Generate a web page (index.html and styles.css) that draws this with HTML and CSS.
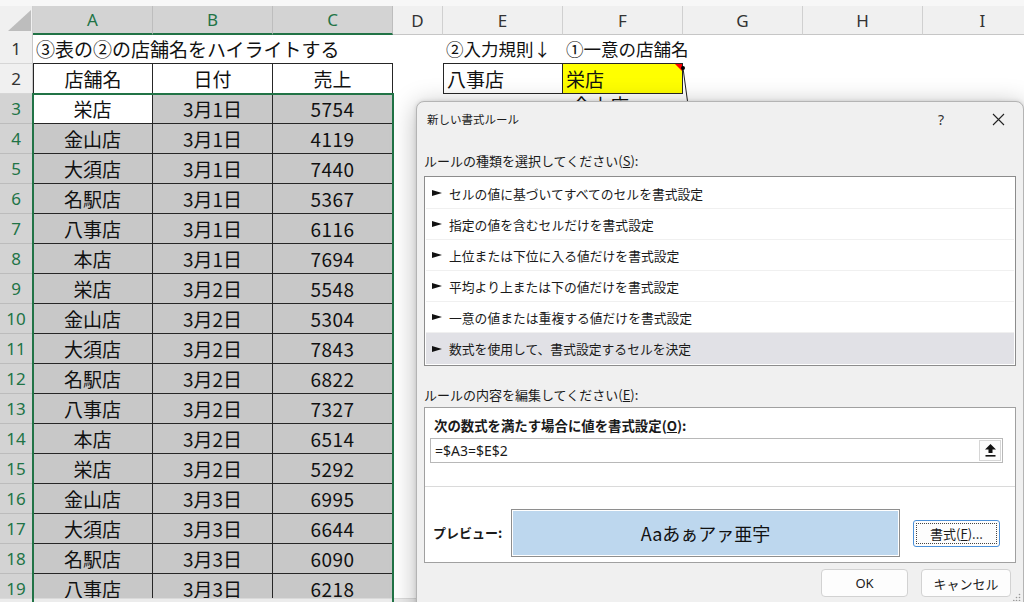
FILE: index.html
```html
<!DOCTYPE html>
<html lang="ja">
<head>
<meta charset="utf-8">
<title>新しい書式ルール</title>
<link rel="stylesheet" href="styles.css">
</head>
<body>
<div class="app">
  <div class="topband"></div>
  <div class="sheet">
    <div class="row hdr">
      <div class="corner"><svg width="33" height="28" viewBox="0 0 33 28"><polygon points="8,25 31,25 31,4" fill="#bdbdbd"/></svg></div>
      <div class="ch sel">A</div><div class="ch sel">B</div><div class="ch sel">C</div>
      <div class="ch">D</div><div class="ch">E</div><div class="ch">F</div><div class="ch">G</div><div class="ch">H</div><div class="ch">I</div>
    </div>
    <div class="row">
      <div class="rh">1</div>
      <div class="c bb left-txt overflow">③表の②の店舗名をハイライトする</div><div class="c bb"></div><div class="c bb"></div>
      <div class="c"></div>
      <div class="c bb left-txt overflow small">②入力規則↓</div><div class="c bb left-txt overflow small">①一意の店舗名</div>
    </div>
    <div class="row">
      <div class="rh">2</div>
      <div class="c t bl">店舗名</div><div class="c t">日付</div><div class="c t">売上</div>
      <div class="c"></div>
      <div class="c t bl left-txt">八事店</div><div class="c t yellow left-txt">栄店<span class="redtri"></span></div>
    </div>
    <div class="row">
      <div class="rh sel">3</div>
      <div class="c t active">栄店</div><div class="c t g">3月1日</div><div class="c t g num">5754</div>
      <div class="c"></div><div class="c"></div><div class="c peek">金山店</div>
    </div>
    <div class="row"><div class="rh sel">4</div><div class="c t g">金山店</div><div class="c t g">3月1日</div><div class="c t g num">4119</div></div>
    <div class="row"><div class="rh sel">5</div><div class="c t g">大須店</div><div class="c t g">3月1日</div><div class="c t g num">7440</div></div>
    <div class="row"><div class="rh sel">6</div><div class="c t g">名駅店</div><div class="c t g">3月1日</div><div class="c t g num">5367</div></div>
    <div class="row"><div class="rh sel">7</div><div class="c t g">八事店</div><div class="c t g">3月1日</div><div class="c t g num">6116</div></div>
    <div class="row"><div class="rh sel">8</div><div class="c t g">本店</div><div class="c t g">3月1日</div><div class="c t g num">7694</div></div>
    <div class="row"><div class="rh sel">9</div><div class="c t g">栄店</div><div class="c t g">3月2日</div><div class="c t g num">5548</div></div>
    <div class="row"><div class="rh sel">10</div><div class="c t g">金山店</div><div class="c t g">3月2日</div><div class="c t g num">5304</div></div>
    <div class="row"><div class="rh sel">11</div><div class="c t g">大須店</div><div class="c t g">3月2日</div><div class="c t g num">7843</div></div>
    <div class="row"><div class="rh sel">12</div><div class="c t g">名駅店</div><div class="c t g">3月2日</div><div class="c t g num">6822</div></div>
    <div class="row"><div class="rh sel">13</div><div class="c t g">八事店</div><div class="c t g">3月2日</div><div class="c t g num">7327</div></div>
    <div class="row"><div class="rh sel">14</div><div class="c t g">本店</div><div class="c t g">3月2日</div><div class="c t g num">6514</div></div>
    <div class="row"><div class="rh sel">15</div><div class="c t g">栄店</div><div class="c t g">3月2日</div><div class="c t g num">5292</div></div>
    <div class="row"><div class="rh sel">16</div><div class="c t g">金山店</div><div class="c t g">3月3日</div><div class="c t g num">6995</div></div>
    <div class="row"><div class="rh sel">17</div><div class="c t g">大須店</div><div class="c t g">3月3日</div><div class="c t g num">6644</div></div>
    <div class="row"><div class="rh sel">18</div><div class="c t g">名駅店</div><div class="c t g">3月3日</div><div class="c t g num">6090</div></div>
    <div class="row"><div class="rh sel">19</div><div class="c t g">八事店</div><div class="c t g">3月3日</div><div class="c t g num">6218</div></div>
  </div>
  <div class="hscroll"></div>

  <div class="selrange"></div>
  <svg class="commentline" width="20" height="40" viewBox="0 0 20 40"><line x1="3" y1="3" x2="8" y2="40" stroke="#222" stroke-width="1"/><circle cx="3" cy="3" r="2" fill="#000"/></svg>

  <div class="dialog">
    <div class="titlebar">
      <span class="title">新しい書式ルール</span>
      <span class="help">?</span>
      <span class="close"><svg width="13" height="13" viewBox="0 0 13 13"><path d="M1 1 L12 12 M12 1 L1 12" stroke="#222" stroke-width="1.1" fill="none"/></svg></span>
    </div>
    <div class="body">
      <div class="label">ルールの種類を選択してください(<u>S</u>):</div>
      <div class="listbox">
        <div class="item"><span class="tri"></span>セルの値に基づいてすべてのセルを書式設定</div>
        <div class="item"><span class="tri"></span>指定の値を含むセルだけを書式設定</div>
        <div class="item"><span class="tri"></span>上位または下位に入る値だけを書式設定</div>
        <div class="item"><span class="tri"></span>平均より上または下の値だけを書式設定</div>
        <div class="item"><span class="tri"></span>一意の値または重複する値だけを書式設定</div>
        <div class="item selected"><span class="tri"></span>数式を使用して、書式設定するセルを決定</div>
      </div>
      <div class="label label2">ルールの内容を編集してください(<u>E</u>):</div>
      <div class="editbox">
        <div class="boldlabel">次の数式を満たす場合に値を書式設定(<u>O</u>):</div>
        <div class="formula">
          <span class="ftext">=$A3=$E$2</span>
          <span class="refbtn"><svg width="11" height="13" viewBox="0 0 11 13"><polygon points="5.5,0 11,5.5 7.5,5.5 7.5,9 3.5,9 3.5,5.5 0,5.5" fill="#111"/><rect x="0.5" y="11" width="10" height="1.6" fill="#111"/></svg></span>
        </div>
        <div class="sep"></div>
        <div class="previewrow">
          <span class="boldlabel plabel">プレビュー:</span>
          <div class="preview"><span>Aaあぁアァ亜宇</span></div>
          <div class="fmtbtn"><span class="focus">書式(<u>F</u>)...</span></div>
        </div>
      </div>
      <div class="buttons">
        <div class="btn ok">OK</div>
        <div class="btn cancel">キャンセル</div>
      </div>
    </div>
    <svg class="grip" width="8" height="8" viewBox="0 0 8 8"><circle cx="6.5" cy="1.5" r="0.8" fill="#999"/><circle cx="6.5" cy="4.5" r="0.8" fill="#999"/><circle cx="3.5" cy="4.5" r="0.8" fill="#999"/><circle cx="6.5" cy="7.5" r="0.8" fill="#999"/><circle cx="3.5" cy="7.5" r="0.8" fill="#999"/><circle cx="0.8" cy="7.5" r="0.8" fill="#999"/></svg>
  </div>
</div>
</body>
</html>
```

FILE: styles.css
```css
* { box-sizing: border-box; }
html, body { margin: 0; padding: 0; background: #fff; }
.app {
  position: relative;
  width: 1024px;
  height: 602px;
  overflow: hidden;
  display: flex;
  flex-direction: column;
  font-family: "Noto Sans CJK JP", "Noto Sans", sans-serif;
  color: #111;
}
.topband { height: 6px; background: #f7f7f7; flex: none; }
.sheet { flex: 1; overflow: hidden; background: #fff; }
.hscroll { height: 4px; flex: none; background: #ececec; border-top: 1px solid #dadada; }

.row {
  display: grid;
  grid-template-columns: 33px 120px 120px 120px 50px 120px 120px 120px 120px 120px;
  height: 30px;
}
.row.hdr { height: 28px; }
.corner { background: #f0f0f0; border-right: 1px solid #cfcfcf; border-bottom: 1px solid #c8c8c8; }
.corner svg { display: block; }
.ch {
  background: #f0f0f0;
  border-right: 1px solid #d0d0d0;
  border-bottom: 1px solid #c6c6c6;
  display: flex; align-items: center; justify-content: center;
  font-family: "Noto Sans", "Liberation Sans", sans-serif;
  font-size: 17px;
  color: #333;
}
.ch.sel { background: #d3d3d3; color: #217346; border-right-color: #bdbdbd; border-bottom: 2px solid #217346; }

.rh {
  background: #f0f0f0;
  border-right: 1px solid #c8c8c8;
  border-bottom: 1px solid #d6d6d6;
  display: flex; align-items: center; justify-content: center;
  font-family: "Noto Sans", "Liberation Sans", sans-serif;
  font-size: 17px;
  color: #333;
}
.rh.sel { background: #d3d3d3; color: #217346; border-bottom-color: #bcbcbc; }

.c {
  display: flex; align-items: center; justify-content: center;
  font-size: 19px;
  white-space: nowrap;
  position: relative;
}
.c.small { font-size: 17.5px; }
.c.t { border-right: 1px solid #262626; border-bottom: 1px solid #262626; }
.c.bb { border-bottom: 1px solid #262626; }
.c.bl { border-left: 1px solid #262626; }
.c.g { background: #c8c8c8; }
.c.active { background: #fff; }
.c.num { letter-spacing: 0.5px; }
.c.left-txt { justify-content: flex-start; padding-left: 3px; }
.c.overflow { overflow: visible; z-index: 1; }
.c.yellow { background: #ffff00; }
.c.peek { align-items: flex-start; justify-content: flex-start; padding-left: 9px; line-height: 20px; padding-top: 1px; }
.redtri {
  position: absolute; right: 0; top: 0;
  width: 0; height: 0;
  border-top: 7px solid #ff0000;
  border-left: 7px solid transparent;
}

.selrange {
  position: absolute;
  left: 32px; top: 93px;
  width: 362px; height: 520px;
  border: 2px solid #217346;
  pointer-events: none;
}
.commentline { position: absolute; left: 680px; top: 65px; }

.dialog {
  position: absolute;
  left: 416px; top: 101px;
  width: 608px; height: 520px;
  background: #f0f0f0;
  border: 1px solid #b4b4b4;
  border-radius: 8px 8px 0 0;
  box-shadow: 0 4px 26px rgba(0,0,0,0.28), 0 0 4px rgba(0,0,0,0.12);
  z-index: 5;
  font-size: 13px;
  color: #1a1a1a;
}
.titlebar {
  height: 34px;
  display: flex; align-items: center;
  padding-left: 10px;
}
.title { font-size: 11.5px; flex: 1; }
.help { width: 24px; text-align: center; font-family: "Noto Sans", sans-serif; font-size: 14px; color: #333; margin-right: 22px; }
.close { width: 46px; display: flex; justify-content: center; margin-right: 2px; }
.close svg { display: block; }

.body { padding: 0 6px 0 7px; }
.label { height: 18px; line-height: 18px; margin-top: 16px; }
.label2 { margin-top: 20px; }
.listbox {
  margin-top: 6px;
  width: 592px; height: 190px;
  background: #fff;
  border: 1px solid #8c8c8c;
  padding: 1px;
}
.item {
  height: 31px;
  display: flex; align-items: center;
  padding-left: 6px;
  border-bottom: 1px solid #f0f0f0;
  font-size: 12.8px;
}
.item:last-child { border-bottom: none; }
.item.selected { background: #e1e1e6; }
.tri {
  width: 0; height: 0;
  border-left: 10px solid #111;
  border-top: 3.5px solid transparent;
  border-bottom: 3.5px solid transparent;
  margin-right: 7px;
}
.editbox {
  margin-top: 3px;
  width: 592px; height: 156px;
  background: #fff;
  border: 1px solid #a0a0a0;
  padding-top: 8px;
  display: flex; flex-direction: column;
}
.boldlabel { font-weight: bold; height: 18px; line-height: 18px; padding-left: 9px; font-size: 13.4px; }
.formula {
  margin: 4px 0 0 5px;
  width: 573px; height: 25px;
  border: 1px solid #b8b8b8;
  display: flex; align-items: center;
  justify-content: space-between;
}
.ftext { font-family: "Noto Sans", sans-serif; font-size: 14px; padding-left: 4px; }
.refbtn {
  width: 22px; height: 21px;
  margin-right: 1px;
  border: 1px solid #d6d6d6;
  background: #fbfbfb;
  display: flex; align-items: center; justify-content: center;
}
.refbtn svg { display: block; }
.sep { margin-top: 23px; height: 1px; background: #dadada; }
.previewrow {
  margin-top: 22px;
  display: flex; align-items: center;
}
.plabel { width: 86px; padding-left: 8px; font-size: 13px; }
.preview {
  width: 389px; height: 48px;
  border: 1px solid #8e8e8e;
  padding: 1px;
  background: #fff;
}
.preview span {
  display: flex; align-items: center; justify-content: center;
  width: 100%; height: 100%;
  background: #bdd7ee;
  font-size: 18px;
  color: #111;
}
.fmtbtn {
  margin-left: 13px;
  width: 87px; height: 27px;
  border: 1px solid #4a90d9;
  border-radius: 3px;
  background: #fdfdfd;
  padding: 2px;
}
.focus {
  display: flex; align-items: center; justify-content: center;
  width: 100%; height: 100%;
  border: 1px dotted #444;
}
.buttons {
  margin-top: 6px;
  display: flex; justify-content: flex-end;
  gap: 13px;
  padding-right: 6px;
}
.btn {
  height: 28px;
  border: 1px solid #d2d2d2;
  border-radius: 4px;
  background: #fdfdfd;
  display: flex; align-items: center; justify-content: center;
}
.btn.ok { width: 87px; font-family: "Noto Sans", sans-serif; }
.btn.cancel { width: 90px; }
.grip { position: absolute; right: 2px; top: 491px; }
```
